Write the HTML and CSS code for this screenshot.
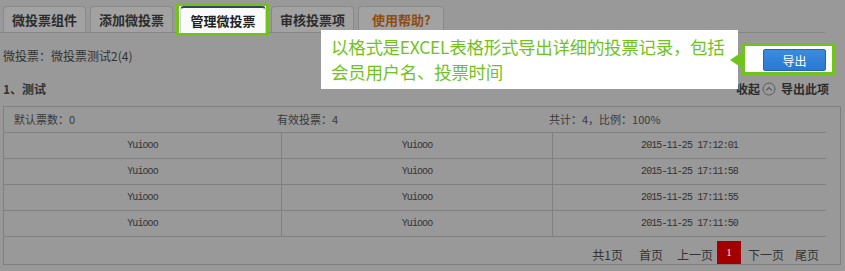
FILE: index.html
```html
<!DOCTYPE html>
<html lang="zh-CN">
<head>
    <meta charset="UTF-8">
    <meta name="viewport" content="width=device-width, initial-scale=1.0">
    <title>管理微投票</title>
    <link rel="stylesheet" href="styles.css">
</head>
<body>
    <ul class="tabs">
        <li class="tab">微投票组件</li>
        <li class="tab">添加微投票</li>
        <li class="tab-spot"><span class="tab active">管理微投票</span></li>
        <li class="tab">审核投票项</li>
        <li class="tab help">使用帮助?</li>
    </ul>

    <div class="vote-head">
        <span class="vote-name">微投票：微投票测试2(4)</span>
        <span class="btn-spot"><button type="button" class="btn-export">导出</button></span>
    </div>

    <!-- guide tip over the page -->
    <div class="tip">以格式是EXCEL表格形式导出详细的投票记录，包括<br>会员用户名、投票时间</div>

    <div class="item-head">
        <b>1、测试</b>
        <span class="item-tools">
            收起
            <svg class="fold-icon" width="14" height="14" viewBox="0 0 14 14">
                <circle cx="7" cy="7" r="6" fill="none" stroke="#5a5a5a" stroke-width="1"/>
                <polyline points="4.2,8.3 7,5.5 9.8,8.3" fill="none" stroke="#5a5a5a" stroke-width="1.2"/>
            </svg>
            <span class="export-item">导出此项</span>
        </span>
    </div>

    <div class="result">
        <div class="summary">
            <span>默认票数：0</span>
            <span>有效投票：4</span>
            <span>共计：4，比例：100%</span>
        </div>
        <table class="records">
            <tr><td class="c1">Yuiooo</td><td class="c2">Yuiooo</td><td>2015-11-25 17:12:01</td></tr>
            <tr><td class="c1">Yuiooo</td><td class="c2">Yuiooo</td><td>2015-11-25 17:11:58</td></tr>
            <tr><td class="c1">Yuiooo</td><td class="c2">Yuiooo</td><td>2015-11-25 17:11:55</td></tr>
            <tr><td class="c1">Yuiooo</td><td class="c2">Yuiooo</td><td>2015-11-25 17:11:50</td></tr>
        </table>
        <div class="pager">
            <span class="total">共1页</span>
            <a class="first">首页</a>
            <a class="prev">上一页</a>
            <a class="current">1</a>
            <a class="next">下一页</a>
            <a class="last">尾页</a>
        </div>
    </div>
</body>
</html>
```

FILE: styles.css
```css
/* dimmed admin page with guide highlights */

body {
    margin: 0;
    position: relative;
    background-color: #999999; /* page under the dark overlay */
    font-family: "Noto Sans CJK SC", sans-serif;
    font-size: 12px;
    color: #333;
}

.tabs {
    list-style: none;
    margin: 6px 20px 0 0;
    padding: 0 0 0 3px;
    height: 26px;
    display: flex;
    align-items: flex-end;
    gap: 4px;
    border-bottom: 1px solid #868686;
}

.tab {
    display: block;
    height: 25px;
    line-height: 25px;
    padding: 0 8px;
    background-color: #a2a2a2;
    border: 1px solid #8a8a8a;
    border-bottom: none;
    border-radius: 4px 4px 0 0;
    font-size: 13px;
    font-weight: bold;
    color: #2c2c2c;
}

.tab.help {
    padding: 0 12px 0 13px;
    color: #8d4c12;
}

/* green frame round the current tab */
.tab-spot {
    margin: 0 -2px -4px -1px;
    padding: 0 0 0 1px;
    border: 3px solid #72c21e;
    background-color: #fff;
}

.tab.active {
    height: 25px;
    padding: 0 9.5px;
    background-color: #fafafa;
    border-color: #cfcfcf;
    border-top: 2px solid #34465a;
    color: #222;
}

.vote-head {
    display: flex;
    justify-content: space-between;
    align-items: flex-start;
    padding: 16px 19px 0 3px;
}

.vote-name {
    line-height: 13px;
    color: #333;
}

.btn-spot {
    position: relative;
    z-index: 1;
    display: flex;
    margin: -6px -9px -4px -21px;
    padding: 3px 6px 1px 18px;
    border: 3px solid #72c21e;
    background-color: #fff;
}

.btn-spot::before {
    content: "";
    position: absolute;
    left: -15px;
    top: 6px;
    border-top: 8px solid transparent;
    border-bottom: 8px solid transparent;
    border-right: 12px solid #72c21e;
}

.btn-export {
    width: 63px;
    height: 22px;
    padding: 0;
    border: 1px solid #2466b4;
    border-radius: 2px;
    background: linear-gradient(#3a8be0, #2b79d2);
    color: #fff;
    font-family: inherit;
    font-size: 12px;
}

.tip {
    position: absolute;
    left: 321px;
    top: 30px;
    width: 417px;
    height: 59px;
    box-sizing: border-box;
    padding: 4px 0 0 10px;
    background-color: #fff;
    color: #72c21e;
    font-size: 17.5px;
    letter-spacing: -0.3px;
    line-height: 25px;
    white-space: nowrap;
}

.item-head {
    display: flex;
    justify-content: space-between;
    align-items: center;
    margin-top: 10px;
    padding: 0 16px 0 3px;
    line-height: 16px;
}

.item-tools {
    display: flex;
    align-items: center;
    font-weight: bold;
    color: #2c2c2c;
}

.fold-icon {
    margin: 0 5px 0 2px;
}

.result {
    margin: 9px 4px 0 3px;
    padding-right: 14px;
    border: 1px solid #808080;
}

.summary {
    display: grid;
    grid-template-columns: 263px 272px 1fr;
    padding-left: 10px;
    height: 25px;
    line-height: 25px;
    border-bottom: 1px solid #808080;
    font-size: 11px;
    color: #3a3a3a;
}

.records {
    width: 100%;
    border-collapse: separate;
    border-spacing: 0;
}

.records td {
    height: 25px;
    padding: 0;
    border-bottom: 1px solid #808080;
    text-align: center;
    font-family: "Liberation Mono", monospace;
    font-size: 10px;
    letter-spacing: -0.9px;
    color: #333;
}

.records td.c1 {
    width: 277px;
    border-right: 1px solid #808080;
}

.records td.c2 {
    width: 270px;
    border-right: 1px solid #808080;
}

.pager {
    display: flex;
    justify-content: flex-end;
    align-items: flex-start;
    height: 23px;
    padding: 4px 7px 0 0;
}

.pager span, .pager a {
    padding-top: 4px;
    line-height: 19px;
    color: #333;
}

.pager .first { margin-left: 16px; }
.pager .prev { margin-left: 14px; }
.pager .next { margin-left: 7px; }
.pager .last { margin-left: 11px; }

.pager a.current {
    margin-left: 4px;
    width: 24px;
    padding-top: 0;
    line-height: 23px;
    text-align: center;
    background-color: #a20000;
    color: #e6e6e6;
    font-family: "Liberation Serif", serif;
    font-size: 11px;
}
```
